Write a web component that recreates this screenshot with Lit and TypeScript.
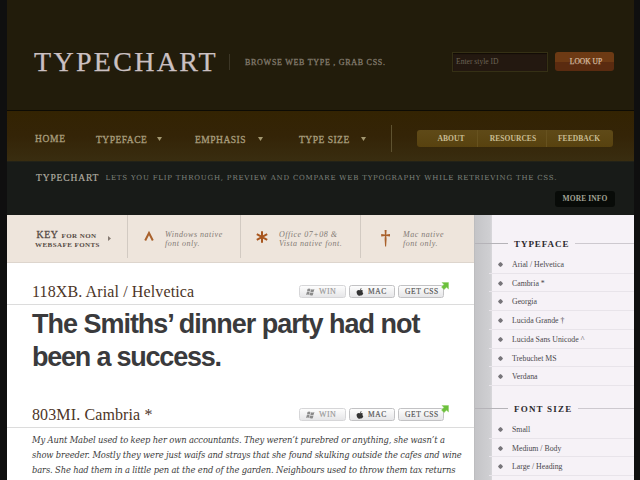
import { LitElement, html, css } from "lit";
import { customElement } from "lit/decorators.js";

const caret = html`<svg class="caret" width="5" height="4" viewBox="0 0 5 4"><path d="M0 0H5L2.5 4Z" fill="currentColor" /></svg>`;

@customElement("font-actions")
class FontActions extends LitElement {
  static styles = css`
    :host { display: flex; gap: 3px; font: 7.5px/12px "Liberation Serif", serif; color: #555; }
    .btn {
      box-sizing: border-box; height: 13px; border: 1px solid #c2c2c4; border-radius: 2.5px;
      background: linear-gradient(#fdfdfd, #e6e6e8); display: flex; align-items: center;
      white-space: nowrap; letter-spacing: 0.6px; position: relative; -webkit-text-stroke: 0.15px;
    }
    .win { width: 47px; padding-left: 6px; gap: 4px; color: #999; border-color: #d6d6d8; font-size: 8px; letter-spacing: 0.4px; }
    .mac { width: 46px; padding-left: 6px; gap: 4px; }
    .css { width: 46px; padding-left: 6px; }
    .arrow { position: absolute; right: -6px; top: -4px; }
  `;
  render() {
    return html`
      <span class="btn win">
        <svg width="9" height="8" viewBox="0 0 9 8" fill="#8b8b8b"><path d="M1.5 1Q3 .2 4.4 .9L3.8 3.5Q2.4 2.9 1 3.6ZM5 1.2Q6.6 1.9 8.4 1L7.7 3.8Q6 4.6 4.3 3.8ZM.8 4.2Q2.3 3.5 3.6 4.2L3 6.8Q1.6 6.1.1 6.9ZM4.1 4.5Q5.8 5.2 7.5 4.5L6.8 7.2Q5.1 7.9 3.4 7.1Z" /></svg>WIN</span>
      <span class="btn mac">
        <svg width="8" height="8" viewBox="0 0 8 8" fill="#333"><path d="M5.5 0Q5.6 1.5 4 2Q3.9.5 5.5 0ZM4 2.3Q5.8 1.6 7 2.8Q5.7 3.9 7.3 5.3Q6.3 8.3 4.2 7.4Q2.6 8.2 1.3 6.4Q0 4 1.1 2.8Q2.2 1.7 4 2.3Z" /></svg>MAC</span>
      <span class="btn css">GET CSS
        <svg class="arrow" width="8" height="8" viewBox="0 0 8 8"><path d="M1 .5H7.5V7L5.5 5.2L3 7.6L.5 5L2.9 2.5Z" fill="#6cc03c" stroke="#8fd066" stroke-width=".5" /></svg>
      </span>`;
  }
}

@customElement("side-group")
class SideGroup extends LitElement {
  static properties = { heading: { type: String }, items: { type: Array } };
  declare heading: string;
  declare items: string[];
  static styles = css`
    :host { display: block; font-family: "Liberation Serif", serif; }
    .head { display: flex; align-items: center; height: 16px; }
    .head::before { content: ""; width: 33px; height: 1px; background: #b5b3b8; margin-right: 6px; }
    .head::after { content: ""; flex: 1; height: 1px; background: #cdc9cf; margin-left: 6px; }
    .title { font-weight: bold; font-size: 9px; letter-spacing: 0.95px; color: #2c2a2e; white-space: nowrap; padding-top: 1px; }
    .title.wide { letter-spacing: 1.2px; }
    .list { margin: 3.75px 0 0 14px; padding: 0; list-style: none; }
    .item {
      box-sizing: border-box; height: 18.75px; border-bottom: 1px solid #e8e4ea; display: flex; align-items: center;
      padding: 1.5px 0 0 9px; gap: 9px; font-size: 7.8px; color: #4a484c; white-space: nowrap;
    }
  `;
  render() {
    return html`
      <div class="head"><span class="title ${this.heading === "FONT SIZE" ? "wide" : ""}">${this.heading}</span></div>
      <ul class="list">
        ${this.items.map((i) => html`<li class="item">
          <svg width="5" height="5" viewBox="0 0 5 5"><path d="M2.5 0L3.9 1.1L5 2.5L3.9 3.9L2.5 5L1.1 3.9L0 2.5L1.1 1.1Z" fill="#77757a" /></svg>${i}</li>`)}
      </ul>`;
  }
}

@customElement("app-root")
class AppRoot extends LitElement {
  static styles = css`
    :host {
      display: block; box-sizing: border-box; width: 640px; height: 480px; overflow: hidden;
      background: #0f0f0f; padding: 0 6px 0 7px; font-family: "Liberation Serif", serif;
    }
    .page { width: 627px; height: 480px; overflow: hidden; }
    .header { box-sizing: border-box; height: 111px; background: #221c0b; border-bottom: 1px solid #0d0b04; display: flex; align-items: center; padding: 13px 20px 0 27px; white-space: nowrap; }
    .logo { font-size: 28px; letter-spacing: 2.3px; color: #cbc0c2; width: 195px; line-height: 30px; -webkit-text-stroke: 0.25px; }
    .rule { width: 1px; height: 16px; background: #3c3626; margin-right: 15px; }
    .tag { font-size: 8px; letter-spacing: 0.72px; color: #81796b; -webkit-text-stroke: 0.3px; width: 207px; padding-top: 1px; }
    .field { box-sizing: border-box; width: 96px; height: 20px; border: 1px solid #353015; background: #231810; color: #6c6456; font-size: 7.6px; line-height: 18px; padding-left: 3px; margin-right: 7px; box-shadow: inset 0 1px 1px #120c06; }
    .lookup { width: 59px; height: 19px; border-radius: 3px; background: linear-gradient(#6d3a14 50%, #5a2b10 50%); color: #d2b79f; font-size: 7.5px; line-height: 20px; text-align: center; text-indent: 3px; -webkit-text-stroke: 0.25px; }
    .nav { box-sizing: border-box; height: 50px; background: linear-gradient(#332302, #342407 50%, #392d10); display: flex; align-items: center; padding: 4px 21px 0 28px; color: #a89d7c; font-size: 9.5px; letter-spacing: 0.5px; white-space: nowrap; }
    .link { display: flex; align-items: center; justify-content: space-between; padding-top: 3px; -webkit-text-stroke: 0.3px; }
    .home { width: 30px; margin-right: 31px; letter-spacing: 0.7px; padding-top: 1.5px; }
    .face { width: 66px; margin-right: 33px; }
    .emph { width: 68px; margin-right: 36px; }
    .size { width: 67px; margin-right: 25px; }
    .caret { color: #a39870; margin-top: -1px; }
    .bar { width: 1px; height: 27px; background: #5e5230; margin-right: 25px; }
    .pills { display: flex; height: 17px; border-radius: 3px; overflow: hidden; background: linear-gradient(#5f4a18, #58420f); color: #c9bd93; font-weight: bold; font-size: 7.5px; line-height: 18px; letter-spacing: 0.05px; }
    .pill { box-sizing: border-box; text-align: center; border-right: 1px solid #67521f; }
    .p1 { width: 61px; padding-left: 8px; }
    .p2 { width: 69px; padding-left: 2px; }
    .p3 { width: 66px; border: 0; padding-right: 2px; }
    .intro { box-sizing: border-box; height: 54px; background: #181b18; border-top: 1px solid #222218; padding-top: 10px; display: flex; flex-direction: column; white-space: nowrap; }
    .line { display: flex; align-items: center; height: 12px; padding-left: 29px; }
    .name { width: 69.5px; font-size: 9.5px; letter-spacing: 0.87px; color: #b0aca0; -webkit-text-stroke: 0.2px; }
    .copy { font: 7px/12px "DejaVu Serif", serif; letter-spacing: 0.8px; color: #7e827c; }
    .more { align-self: flex-end; width: 60px; height: 16px; margin: 7px 19px 0 0; border-radius: 3px; background: #080b08; color: #a3a396; font-weight: bold; font-size: 7.5px; line-height: 16px; text-align: center; letter-spacing: 0.1px; }
    .body { display: flex; height: 265px; }
    .main { width: 467px; background: #fff; }
    .key { box-sizing: border-box; height: 48px; background: #eee5dc; border-bottom: 1px solid #ddd5cd; display: flex; white-space: nowrap; }
    .cell { box-sizing: border-box; display: flex; border-left: 1px solid #d2cac2; height: 43px; }
    .k0 { width: 120px; border: 0; padding: 15px 0 0 28px; gap: 8px; align-items: flex-start; }
    .keytext { font-weight: bold; font-size: 7px; letter-spacing: 0.43px; color: #564b44; line-height: 9px; width: 65px; }
    .big { font-weight: normal; font-size: 9.8px; letter-spacing: 0.6px; margin: 0 3px 0 1.5px; line-height: 9px; -webkit-text-stroke: 0.3px; }
    .tri { margin-top: 6px; }
    .k1 { width: 113px; padding: 15px 0 0 15px; }
    .k2 { width: 120px; padding: 15px 0 0 15px; }
    .k3 { width: 114px; padding: 15px 0 0 19px; }
    .note { font-style: italic; font-size: 8px; line-height: 9px; letter-spacing: 0.52px; color: #827a74; }
    .sym { margin-right: 10px; }
    .entry { box-sizing: border-box; height: 42px; border-bottom: 1px solid #dcdcdc; display: flex; justify-content: space-between; padding: 17px 30px 0 25px; }
    .second { margin-top: 12px; }
    .ename { font-size: 16px; line-height: 24px; letter-spacing: 0.12px; color: #4c3527; white-space: nowrap; }
    .acts { margin-top: 5px; }
    .headline { height: 66px; margin: 3px 0 0 25px; font: bold 27px/33px "Liberation Sans", sans-serif; letter-spacing: -1.02px; color: #3a3a3c; white-space: nowrap; }
    .tight { letter-spacing: -1.22px; }
    .para { margin: 4px 0 0 25px; font: italic 9.3px/15px "DejaVu Serif Condensed", "DejaVu Serif", serif; letter-spacing: -0.14px; font-stretch: condensed; color: #3c3c3c; white-space: nowrap; }
    .row { display: block; }
    .side { box-sizing: border-box; width: 160px; border-left: 1px solid #bdbdbf; background: linear-gradient(90deg, #c4c4c7, #cfcfd2 15px, #d9d8dc 17px, #f6f2f7 17px); padding-top: 20px; }
    .g2 { margin-top: 14px; }
  `;
  render() {
    return html`
      <div class="page">
        <div class="header">
          <div class="logo">TYPECHART</div><div class="rule"></div>
          <div class="tag">BROWSE WEB TYPE , GRAB CSS.</div>
          <div class="field">Enter style ID</div><div class="lookup">LOOK UP</div>
        </div>
        <div class="nav">
          <span class="link home">HOME</span>
          <span class="link face">TYPEFACE ${caret}</span>
          <span class="link emph">EMPHASIS ${caret}</span>
          <span class="link size">TYPE SIZE ${caret}</span>
          <span class="bar"></span>
          <div class="pills"><span class="pill p1">ABOUT</span><span class="pill p2">RESOURCES</span><span class="pill p3">FEEDBACK</span></div>
        </div>
        <div class="intro">
          <div class="line"><span class="name">TYPECHART</span><span class="copy">LETS YOU FLIP THROUGH, PREVIEW AND COMPARE WEB TYPOGRAPHY WHILE RETRIEVING THE CSS.</span></div>
          <div class="more">MORE INFO</div>
        </div>
        <div class="body">
          <div class="main">
            <div class="key">
              <div class="cell k0">
                <div class="keytext"><span class="big">KEY</span>FOR NON<br />WEBSAFE FONTS</div>
                <svg class="tri" width="3" height="5" viewBox="0 0 3 5"><path d="M0 0L3 2.5L0 5Z" fill="#857a72" /></svg>
              </div>
              <div class="cell k1">
                <svg class="sym" width="12" height="18" viewBox="0 0 12 18"><path d="M2.2 10.5L6 3L9.8 10.5" fill="none" stroke="#a9612c" stroke-width="2" /></svg>
                <div class="note">Windows native<br />font only.</div>
              </div>
              <div class="cell k2">
                <svg class="sym" width="13" height="18" viewBox="0 0 13 18"><path d="M6 1.3V12.7M.8 4.2L11.2 9.8M11.2 4.2L.8 9.8" fill="none" stroke="#a9571f" stroke-width="2" /></svg>
                <div class="note">Office 07+08 &amp;<br />Vista native font.</div>
              </div>
              <div class="cell k3">
                <svg class="sym" width="13" height="18" viewBox="0 0 13 18"><path d="M4.6 0H6.6L6.3 4.6L10 4.1V6.4L6.3 5.9L6.6 9L6.1 16.5H5.1L4.6 9L4.9 5.9L1.2 6.4V4.1L4.9 4.6Z" fill="#a9612c" /></svg>
                <div class="note">Mac native<br />font only.</div>
              </div>
            </div>
            <div class="entry"><span class="ename">118XB. Arial / Helvetica</span><font-actions class="acts"></font-actions></div>
            <div class="headline">The Smiths’ dinner party had not<br /><span class="tight">been a success.</span></div>
            <div class="entry second"><span class="ename">803MI. Cambria *</span><font-actions class="acts"></font-actions></div>
            <div class="para">
              <span class="row">My Aunt Mabel used to keep her own accountants. They weren’t purebred or anything, she wasn’t a</span>
              <span class="row">show breeder. Mostly they were just waifs and strays that she found skulking outside the cafes and wine</span>
              <span class="row">bars. She had them in a little pen at the end of the garden. Neighbours used to throw them tax returns</span>
            </div>
          </div>
          <div class="side">
            <side-group heading="TYPEFACE" .items=${["Arial / Helvetica", "Cambria *", "Georgia", "Lucida Grande †", "Lucida Sans Unicode ^", "Trebuchet MS", "Verdana"]}></side-group>
            <side-group class="g2" heading="FONT SIZE" .items=${["Small", "Medium / Body", "Large / Heading"]}></side-group>
          </div>
        </div>
      </div>`;
  }
}
